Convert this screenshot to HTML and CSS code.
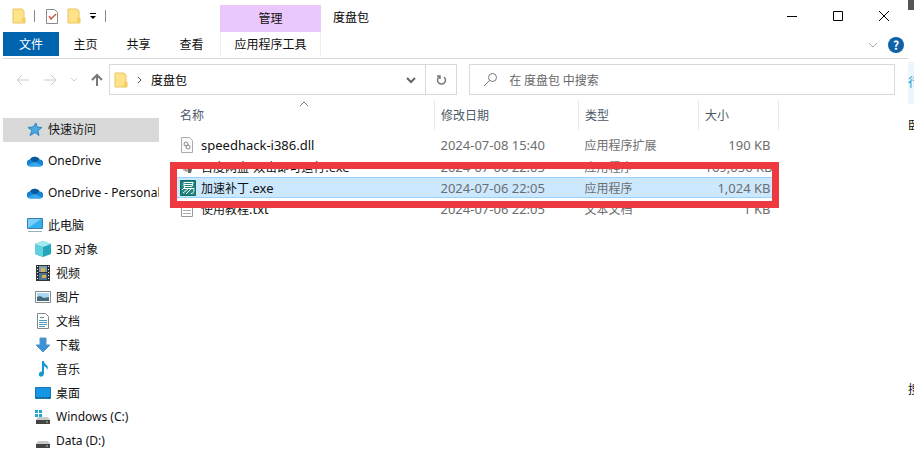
FILE: index.html
```
<!DOCTYPE html>
<html lang="zh-CN">
<head>
<meta charset="utf-8">
<title>度盘包</title>
<link rel="stylesheet" href="styles.css">
</head>
<body>

<!-- shared icons -->
<svg class="defs" width="0" height="0">
  <symbol id="folder" viewBox="0 0 14 16">
    <path d="M1 1h9l2 2v7h1v5H1z" fill="#ffe28a" stroke="#e9c75f"/>
    <path d="M10 10h3v5h-3z" fill="#f5cf62"/>
  </symbol>
  <symbol id="cloud" viewBox="0 0 16 12">
    <path d="M3.500 11.500a3.500 3.500 0 0 1-.5-7A5.500 5.500 0 0 1 12.500 4.500a3.500 3.500 0 0 1 .5 7z" fill="#1585d3"/>
    <path d="M3 4.500A5.500 5.500 0 0 1 12.500 4.500L8 8z" fill="#075a9e"/>
    <path d="M1 10l7-3 7 3.500-2 1H3.500z" fill="#35a9ec"/>
  </symbol>
  <symbol id="drive" viewBox="0 0 16 16">
    <path d="M3 8h10l2 3H1z" fill="#c9c9c9"/>
    <path d="M1 11h14v4H1z" fill="#444"/>
    <path d="M11 13h2" stroke="#8fe08f"/>
  </symbol>
</svg>

<div class="desktop">
<div class="window">

<header class="titlebar">
  <div class="quick">
    <svg width="14" height="16"><use href="#folder"/></svg>
    <span class="sep"></span>
    <svg width="14" height="16" viewBox="0 0 14 16"><path d="M1.500 1.500h8l3 3v11h-11z" fill="#fff" stroke="#8a8a8a"/><path d="M4 8l2 3 5-5" fill="none" stroke="#d0604e" stroke-width="1.500"/></svg>
    <svg width="14" height="16"><use href="#folder"/></svg>
    <svg width="8" height="8" viewBox="0 0 8 8"><path d="M1 1.500h6" stroke="#000"/><path d="M1 4h6L4 7z"/></svg>
    <span class="sep"></span>
  </div>
  <div class="manage">管理</div>
  <h1 class="title">度盘包</h1>
  <div class="controls">
    <button type="button" aria-label="最小化"><svg width="12" height="12"><path d="M1 6.500h10" stroke="#000"/></svg></button>
    <button type="button" aria-label="最大化"><svg width="12" height="12"><path d="M1.500 1.500h9v9h-9z" fill="none" stroke="#000"/></svg></button>
    <button type="button" aria-label="关闭"><svg width="12" height="12"><path d="M1 1l10 10M11 1L1 11" stroke="#000"/></svg></button>
  </div>
</header>

<nav class="tabs">
  <button type="button" class="file">文件</button>
  <button type="button">主页</button>
  <button type="button">共享</button>
  <button type="button">查看</button>
  <button type="button" class="tools">应用程序工具</button>
  <div class="help">
    <svg width="10" height="6"><path d="M1 1l4 4 4-4" fill="none" stroke="#aaa"/></svg>
    <button type="button" aria-label="帮助">?</button>
  </div>
</nav>

<div class="addressbar">
  <div class="arrows">
    <button type="button" aria-label="后退"><svg width="14" height="12"><path d="M6 1L1 6l5 5M1 6h12" fill="none" stroke="#ccc"/></svg></button>
    <button type="button" aria-label="前进"><svg width="14" height="12"><path d="M8 1l5 5-5 5M13 6H1" fill="none" stroke="#ccc"/></svg></button>
    <button type="button" aria-label="最近"><svg width="8" height="6"><path d="M1 1l3 3 3-3" fill="none" stroke="#ccc"/></svg></button>
    <button type="button" aria-label="向上"><svg width="12" height="14"><path d="M1 7l5-5 5 5M6 2v11" fill="none" stroke="#777" stroke-width="2"/></svg></button>
  </div>
  <div class="path">
    <svg width="14" height="16"><use href="#folder"/></svg>
    <svg width="5" height="8"><path d="M1 1l3 3-3 3" fill="none" stroke="#555"/></svg>
    <span class="crumb">度盘包</span>
    <svg width="10" height="8"><path d="M1 2l4 4 4-4" fill="none" stroke="#666" stroke-width="2"/></svg>
  </div>
  <button type="button" class="refresh" aria-label="刷新"><svg width="12" height="12" viewBox="0 0 12 12"><path d="M9 3a4 4 0 1 1-5 0M2 2h3v3" fill="none" stroke="#777" stroke-width="1.500"/></svg></button>
  <div class="search">
    <svg width="14" height="14"><circle cx="9.500" cy="4.500" r="4" fill="none" stroke="#777"/><path d="M7 7l-6 6" stroke="#777"/></svg>
    <input type="text" aria-label="搜索" placeholder="在 度盘包 中搜索">
  </div>
</div>

<div class="main">
<aside class="sidebar">
  <a href="#" class="root selected">
    <svg width="16" height="16"><path d="M9 2l1 4 5 .5-4 3 1 5-4-3-5 3 2-5-4-3 5-.5z" fill="#4aa9df" stroke="#2a87c0"/></svg>快速访问</a>
  <a href="#" class="root latin"><svg width="16" height="12"><use href="#cloud"/></svg>OneDrive</a>
  <a href="#" class="root latin"><svg width="16" height="12"><use href="#cloud"/></svg>OneDrive - Personal</a>
  <a href="#" class="root pc">
    <svg width="16" height="16"><path d="M.5 1.500h15v10H.5z" fill="#35b0ee" stroke="#3d7fa5"/><path d="M1 11L14 2H1z" fill="#79d0fa"/><path d="M1 14.500h14" stroke="#9ab0bb"/></svg>此电脑</a>
  <a href="#"><svg width="16" height="16"><path d="M0 3l8-3 8 3v10l-8 3-8-3z" fill="#23a5bb"/><path d="M0 3l8 3v10l-8-3z" fill="#60d0df"/><path d="M0 3l8-3 8 3-8 3z" fill="#a5eaf2"/></svg><span><span class="latin">3D</span> 对象</span></a>
  <a href="#"><svg width="16" height="16"><path d="M1 0h14v16H1z" fill="#333"/><path d="M4 1h8v6H4z" fill="#779ec0"/><path d="M4 8h8v7H4z" fill="#4c7298"/><path d="M6 3h4v4H6zM7 10h4v3H7z" fill="#d4b450"/><path d="M2.500 1v15M13.500 1v15" stroke="#eee" stroke-dasharray="1 2"/></svg>视频</a>
  <a href="#"><svg width="16" height="16"><path d="M.5 2.500h15v11H.5z" fill="#fff" stroke="#888"/><path d="M2 4h12v8H2z" fill="#a8d9ef"/><path d="M2 8l3-1 4 2 5-1v4H2z" fill="#456b7b"/></svg>图片</a>
  <a href="#"><svg width="16" height="16"><path d="M2.500.5h8l3 3v12h-11z" fill="#fff" stroke="#888"/><path d="M5 4.500h4M4 7.500h8M4 9.500h8M4 11.500h8M4 13.500h6" stroke="#4c9bbb"/></svg>文档</a>
  <a href="#"><svg width="16" height="16"><path d="M5 1h6v7h4l-7 7-7-7h4z" fill="#3a92d8" stroke="#5a94c0"/></svg>下载</a>
  <a href="#"><svg width="16" height="16"><path d="M7 0h2c0 4 6 4 3 9 0-3-2-3-3-4v8c-1 4-6 3-5 0 0-2 2-3 3-2z" fill="#159bd2"/></svg>音乐</a>
  <a href="#"><svg width="16" height="16"><path d="M.5 2.500h15v11H.5z" fill="#1596e5" stroke="#1778b0"/><path d="M1 12.500h14" stroke="#155885" stroke-dasharray="2 1"/></svg>桌面</a>
  <a href="#" class="latin"><svg width="16" height="16"><use href="#drive"/><path d="M0 1h3v3H0zM4 1h3v3H4zM0 5h3v3H0zM4 5h3v3H4z" fill="#24a8cf"/></svg>Windows (C:)</a>
  <a href="#" class="latin"><svg width="16" height="16"><use href="#drive"/></svg>Data (D:)</a>
</aside>

<section class="content">
<table class="files">
  <thead>
    <tr>
      <th class="name">名称<svg class="sort" width="10" height="6"><path d="M1 5l4-4 4 4" fill="none" stroke="#777"/></svg></th>
      <th class="date">修改日期</th>
      <th class="type">类型</th>
      <th class="size">大小</th>
    </tr>
  </thead>
  <tbody>
    <tr>
      <td class="name"><svg width="14" height="16"><path d="M1.500.5h8l3 3v12h-11z" fill="#fafafa" stroke="#aaa"/><circle cx="6" cy="7" r="2" fill="none" stroke="#888"/><circle cx="8" cy="10" r="2" fill="none" stroke="#888"/></svg><span class="latin">speedhack-i386.dll</span></td>
      <td class="latin">2024-07-08 15:40</td>
      <td>应用程序扩展</td>
      <td class="latin size">190 KB</td>
    </tr>
    <tr>
      <td class="name"><svg width="14" height="16"><circle cx="7" cy="8" r="5" fill="#bbb"/><path d="M4 9l3 3H6z" fill="#d33"/><path d="M8 10h4l-1 4H8z" fill="#666"/></svg>百度网盘-双击即可运行<span class="latin">.exe</span></td>
      <td class="latin">2024-07-06 22:05</td>
      <td>应用程序</td>
      <td class="latin size">169,056 KB</td>
    </tr>
    <tr class="picked">
      <td class="name"><svg width="16" height="16"><path d="M.5.5h15v15H.5z" fill="#23857d" stroke="#0f6f68"/><path d="M4 2.500h9l-1 4H4zM4 4.500h8M5 7l-3 3M4 8.500h10c0 3 0 5-3 5M8 9l-5 4M11 9l-5 5" fill="none" stroke="#fff"/></svg>加速补丁<span class="latin">.exe</span></td>
      <td class="latin">2024-07-06 22:05</td>
      <td>应用程序</td>
      <td class="latin size">1,024 KB</td>
    </tr>
    <tr>
      <td class="name"><svg width="14" height="16"><path d="M1.500.5h11v15h-11z" fill="#fff" stroke="#999"/><path d="M3 3.500h8M3 6.500h8M3 9.500h8M3 12.500h8" stroke="#aaa"/></svg>使用教程<span class="latin">.txt</span></td>
      <td class="latin">2024-07-06 22:05</td>
      <td>文本文档</td>
      <td class="latin size">1 KB</td>
    </tr>
  </tbody>
</table>
<div class="marker"></div>
</section>
</div>

</div>

<!-- page showing behind the window -->
<div class="behind">
  <div class="behind-top"></div>
  <div class="behind-tab">行</div>
  <div class="behind-text">卧</div>
  <div class="behind-text low">搜</div>
</div>
</div>

</body>
</html>
```
FILE: styles.css
```
* {
  box-sizing: border-box;
}

body {
  margin: 0;
  background: #fff;
  color: #111;
  font: 12px/16px "Noto Sans CJK SC", sans-serif;
}

.latin {
  font-family: "Noto Sans", "Noto Sans CJK SC", sans-serif;
}

svg {
  display: block;
  flex: none;
}

.defs {
  position: absolute;
}

button {
  display: flex;
  align-items: center;
  justify-content: center;
  border: 0;
  padding: 0;
  background: none;
  color: inherit;
  font: inherit;
}

.desktop {
  display: flex;
  height: 100vh;
  overflow: hidden;
}

.window {
  display: flex;
  flex-direction: column;
  flex: 1;
  min-width: 0;
  padding-left: 3px;
}

/* title bar */
.titlebar {
  display: flex;
  height: 32px;
}

.quick {
  display: flex;
  align-items: center;
  gap: 8px;
  width: 217px;
  padding-left: 9px;
}

.sep {
  width: 1px;
  height: 12px;
  margin-right: 2px;
  background: #888;
}

.manage {
  width: 101px;
  margin-top: 5px;
  padding-top: 5px;
  background: #ebc8fb;
  text-align: center;
}

.title {
  flex: 1;
  margin: 0;
  padding: 9px 12px;
  color: #000;
  font-size: 12px;
  font-weight: 400;
}

.controls {
  display: flex;
  margin-right: 1px;
}

.controls button {
  width: 46px;
}

/* ribbon tabs */
.tabs {
  display: flex;
  height: 27px;
  border-bottom: 1px solid #dadada;
}

.tabs > button {
  width: 53px;
  height: 24px;
}

.tabs .file {
  width: 56px;
  background: #0063ad;
  color: #fff;
}

.tabs .tools {
  width: 101px;
  margin-left: 2px;
  border: 1px solid #eee;
  border-width: 0 1px;
}

.help {
  display: flex;
  align-items: center;
  gap: 10px;
  margin-left: auto;
  padding-right: 4px;
}

.help button {
  width: 16px;
  height: 16px;
  border-radius: 50%;
  background: #0f62a6;
  color: #fff;
  font-weight: 700;
}

/* address bar */
.addressbar {
  display: flex;
  height: 31px;
  margin: 5px 13px 0 0;
}

.arrows {
  display: flex;
  align-items: center;
  flex: none;
  gap: 13px;
  width: 106px;
  padding-left: 13px;
}

.path {
  display: flex;
  align-items: center;
  flex: 315 1 0;
  gap: 9px;
  padding: 0 9px 0 4px;
  border: 1px solid #d9d9d9;
}

.crumb {
  flex: 1;
  color: #000;
}

.refresh {
  width: 31px;
  border: 1px solid #d9d9d9;
  border-left: 0;
}

.search {
  display: flex;
  align-items: center;
  flex: 428 1 0;
  margin-left: 12px;
  padding-left: 13px;
  border: 1px solid #d9d9d9;
}

.search input {
  flex: 1;
  min-width: 0;
  border: 0;
  padding: 0 12px;
  outline: 0;
  font: inherit;
}

.search input::placeholder {
  color: #666;
}

/* navigation pane */
.main {
  display: flex;
  flex: 1;
  min-height: 0;
}

.sidebar {
  width: 156px;
  padding-top: 23px;
  overflow: hidden;
}

.sidebar a {
  display: flex;
  align-items: center;
  gap: 5px;
  height: 24px;
  padding: 0 0 2px 32px;
  color: #111;
  text-decoration: none;
  white-space: nowrap;
}

.sidebar .root {
  margin-bottom: 8px;
  padding-left: 24px;
}

.sidebar .pc {
  margin-bottom: 0;
}

.sidebar .selected {
  background: #d9d9d9;
}

/* file list */
.content {
  position: relative;
  flex: 1;
  padding: 5px 0 0 15px;
}

.files {
  width: 605px;
  border-collapse: collapse;
  table-layout: fixed;
}

.files .latin {
  font-size: 13px;
}

.files th {
  height: 30px;
  padding: 0 6px;
  border-right: 1px solid #e8e8e8;
  color: #4c5a68;
  font-weight: 400;
  text-align: left;
}

.files th.name {
  position: relative;
}

.sort {
  position: absolute;
  top: 1px;
  left: 125px;
}

.files .date {
  width: 144px;
}

.files .type {
  width: 120px;
}

.files th.size {
  width: 80px;
}

.files td {
  height: 21px;
  padding: 0 6px;
  color: #6d6d6d;
  white-space: nowrap;
}

.files tbody tr:first-child td {
  height: 22px;
}

.files tbody::before {
  content: "";
  display: block;
  height: 4px;
}

.files td.name {
  display: flex;
  align-items: center;
  color: #111;
}

.files td.name svg {
  width: 16px;
  margin-right: 5px;
}

.files td.size {
  padding-right: 8px;
  text-align: right;
}

.files .picked {
  background: #cce8ff;
  outline: 1px solid #99d1ff;
  outline-offset: -1px;
}

/* red frame drawn over the list */
.marker {
  position: absolute;
  top: 67px;
  left: 11px;
  width: 609px;
  height: 46px;
  border: 7px solid #ee3940;
}

.behind {
  width: 6px;
  overflow: hidden;
}

.behind-top {
  height: 10px;
  margin-bottom: 52px;
  background: #555;
}

.behind-tab {
  height: 42px;
  padding-top: 12px;
  background: #eaf6fc;
  color: #159bd2;
}

.behind-text {
  padding-top: 13px;
}

.behind-text.low {
  padding-top: 248px;
}
```
